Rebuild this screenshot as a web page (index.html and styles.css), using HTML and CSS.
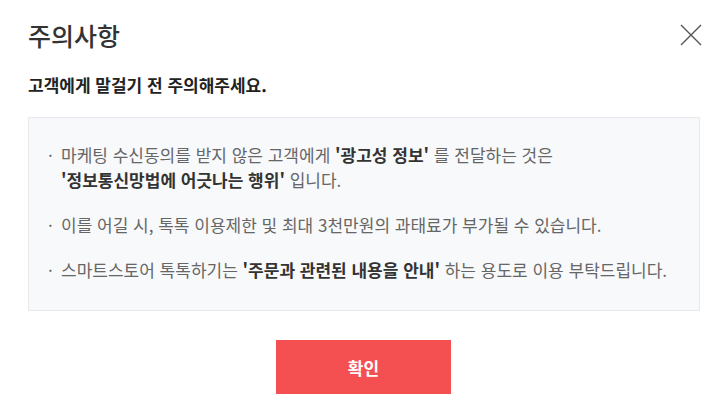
FILE: index.html
```html
<!DOCTYPE html>
<html lang="ko">
<head>
  <meta charset="utf-8">
  <title>주의사항</title>
  <link rel="stylesheet" href="styles.css">
</head>
<body>
  <div class="modal">
    <div class="modal-head">
      <h1 class="modal-title">주의사항</h1>
      <button class="close_btn" type="button" aria-label="닫기">
        <svg width="22" height="22" viewBox="0 0 22 22">
          <path d="M1 1 L21 21 M21 1 L1 21" stroke="#555" stroke-width="1.4" fill="none"/>
        </svg>
      </button>
    </div>
    <p class="sub">고객에게 말걸기 전 주의해주세요.</p>
    <ul class="notice">
      <li><span class="dot">·</span><span>마케팅 수신동의를 받지 않은 고객에게 <b>'광고성 정보'</b> 를 전달하는 것은<br><b>'정보통신망법에 어긋나는 행위'</b> 입니다.</span></li>
      <li><span class="dot">·</span><span>이를 어길 시, 톡톡 이용제한 및 최대 3천만원의 과태료가 부가될 수 있습니다.</span></li>
      <li><span class="dot">·</span><span>스마트스토어 톡톡하기는 <b>'주문과 관련된 내용을 안내'</b> 하는 용도로 이용 부탁드립니다.</span></li>
    </ul>
    <div class="foot">
      <button class="ok_btn" type="button">확인</button>
    </div>
  </div>
</body>
</html>
```

FILE: styles.css
```css
body {
  margin: 0;
  background-color: #fff;
  font-family: "Noto Sans CJK KR", "Noto Sans", sans-serif;
}

.modal {
  padding: 18px 12px 0 28px;
  width: 674px;
}

.modal-head {
  display: flex;
  justify-content: space-between;
  align-items: center;
}

.modal-title {
  margin: 0;
  font-size: 25px;
  font-weight: 500;
  color: #333;
  line-height: 34px;
}

.close_btn {
  border: none;
  background: transparent;
  padding: 0;
  width: 22px;
  height: 22px;
  cursor: pointer;
}

.sub {
  margin: 21px 0 0;
  font-size: 17px;
  font-weight: 700;
  color: #222;
  line-height: 24px;
}

.notice {
  list-style: none;
  margin: 20px 2px 0 0;
  padding: 24px 19px 28px;
  background-color: #f8f9fb;
  border: 1px solid #e6e8ec;
  display: flex;
  flex-direction: column;
  gap: 20px;
}

.notice li {
  display: flex;
  font-size: 17px;
  line-height: 25px;
  color: #666;
}

.notice b {
  color: #333;
}

.dot {
  width: 13px;
  flex: none;
}

.foot {
  display: flex;
  justify-content: center;
  padding: 29px 3px 0 0;
}

.ok_btn {
  width: 175px;
  height: 54px;
  border: none;
  background-color: #f44f51;
  color: #fff;
  font-family: inherit;
  font-size: 17px;
  font-weight: 700;
  cursor: pointer;
}
```
